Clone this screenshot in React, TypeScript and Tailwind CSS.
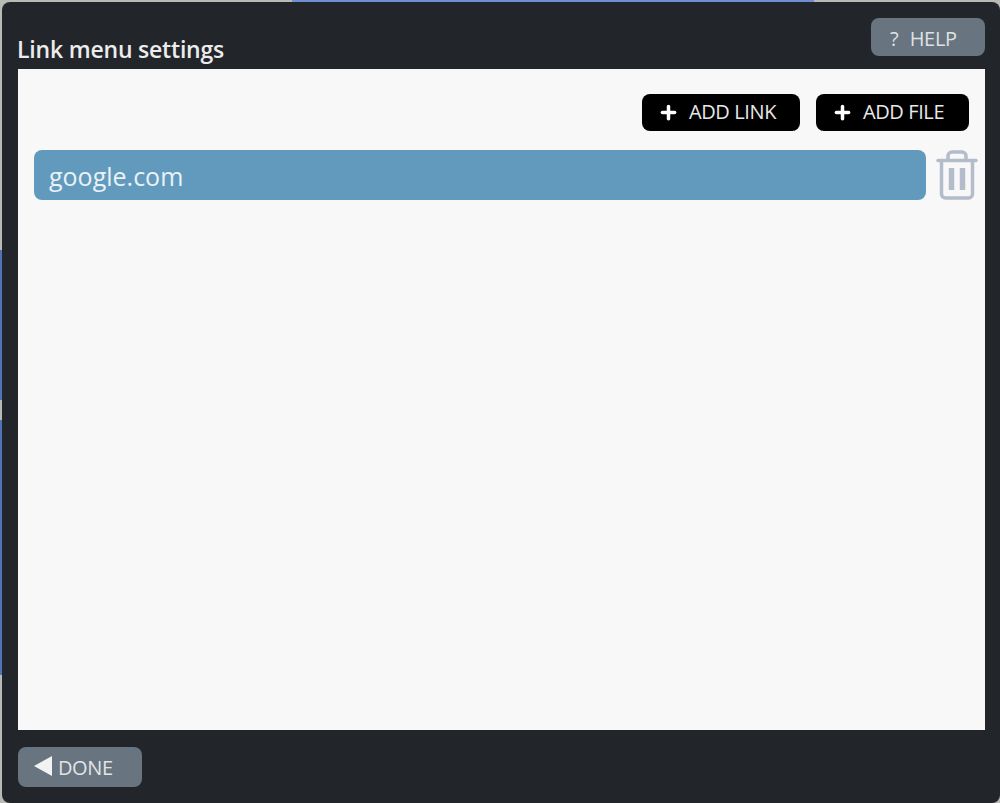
import { Plus } from 'lucide-react';

function TrashIcon() {
  return (
    <svg className="w-[42px] h-[50px] shrink-0" viewBox="0 0 42 50" fill="none" stroke="#b3bccb" strokeWidth={3.5}>
      <path d="M2 10.5h38" strokeLinecap="round" />
      <path d="M12 10V6a4 4 0 014-4h10a4 4 0 014 4v4" />
      <path d="M5.5 11v33a4 4 0 004 4h23a4 4 0 004-4V11" />
      <path d="M15.5 18v22M26.5 18v22" strokeWidth={5.5} />
    </svg>
  );
}

function AddButton({ label, width }: { label: string; width: string }) {
  return (
    <button className={`${width} h-[37px] bg-black rounded-lg flex items-center pl-[16px] gap-[10px] text-[#e8e8e8] text-[20px] font-medium leading-none`}>
      <Plus className="w-[21px] h-[21px] text-white" strokeWidth={4} />
      <span className="tracking-[-0.4px] pb-[2px]">{label}</span>
    </button>
  );
}

export default function App() {
  return (
    <div className="w-[1000px] h-[803px] flex flex-col bg-[#b9b9b6] font-['Open_Sans','Noto_Sans',sans-serif] overflow-hidden">
      {/* strips of the page behind the dialog */}
      <div className="h-[2px] flex shrink-0">
        <div className="w-[292px]" />
        <div className="w-[522px] bg-[#6f8fd3]" />
      </div>

      <div className="flex-1 flex">
        <div className="w-[2px] flex flex-col shrink-0">
          <div className="h-[248px]" />
          <div className="h-[150px] bg-[#4f74b8]" />
          <div className="h-[20px]" />
          <div className="h-[255px] bg-[#4f74b8]" />
        </div>

        <div className="flex-1 flex flex-col pl-[16px] pr-[15px] bg-[#22262b] rounded-lg">
          <div className="h-[67px] flex items-end justify-between shrink-0">
            <h1 className="text-[#ececec] text-[23px] font-semibold leading-none tracking-[-0.2px] pb-[8px] -ml-[1px]">
              Link menu settings
            </h1>
            <button className="w-[114px] h-[38px] mb-[13px] bg-[#68747f] rounded-lg text-[#dfe2e4] text-[20px] font-medium leading-none flex items-center pl-[19px] pt-[4px] gap-[11px]">
              <span>?</span>
              <span className="tracking-[-0.3px]">HELP</span>
            </button>
          </div>

          <div className="h-[661px] bg-[#f8f8f8] shrink-0 pt-[25px] pl-[16px] pr-[7px]">
            <div className="flex justify-end gap-[16px] pr-[9px]">
              <AddButton label="ADD LINK" width="w-[158px]" />
              <AddButton label="ADD FILE" width="w-[153px]" />
            </div>
            <div className="flex items-center gap-[10px] mt-[19px]">
              <div className="w-[892px] h-[50px] bg-[#619abd] rounded-lg flex items-center pl-[15px] pt-[2px] text-[#e9f2f7] text-[25px] leading-none">
                google.com
              </div>
              <TrashIcon />
            </div>
          </div>

          <div className="pt-[17px]">
            <button className="w-[124px] h-[40px] bg-[#68747f] rounded-lg text-[#e2e4e6] text-[20px] font-medium leading-none flex items-center pl-[16px] gap-[5px]">
              <svg className="w-[19px] h-[20px] -mt-[3px]" viewBox="0 0 19 20" fill="#f2f2f2">
                <path d="M0 10L18 0v20z" />
              </svg>
              <span className="tracking-[-0.4px] pt-[2px]">DONE</span>
            </button>
          </div>
        </div>
      </div>
    </div>
  );
}
